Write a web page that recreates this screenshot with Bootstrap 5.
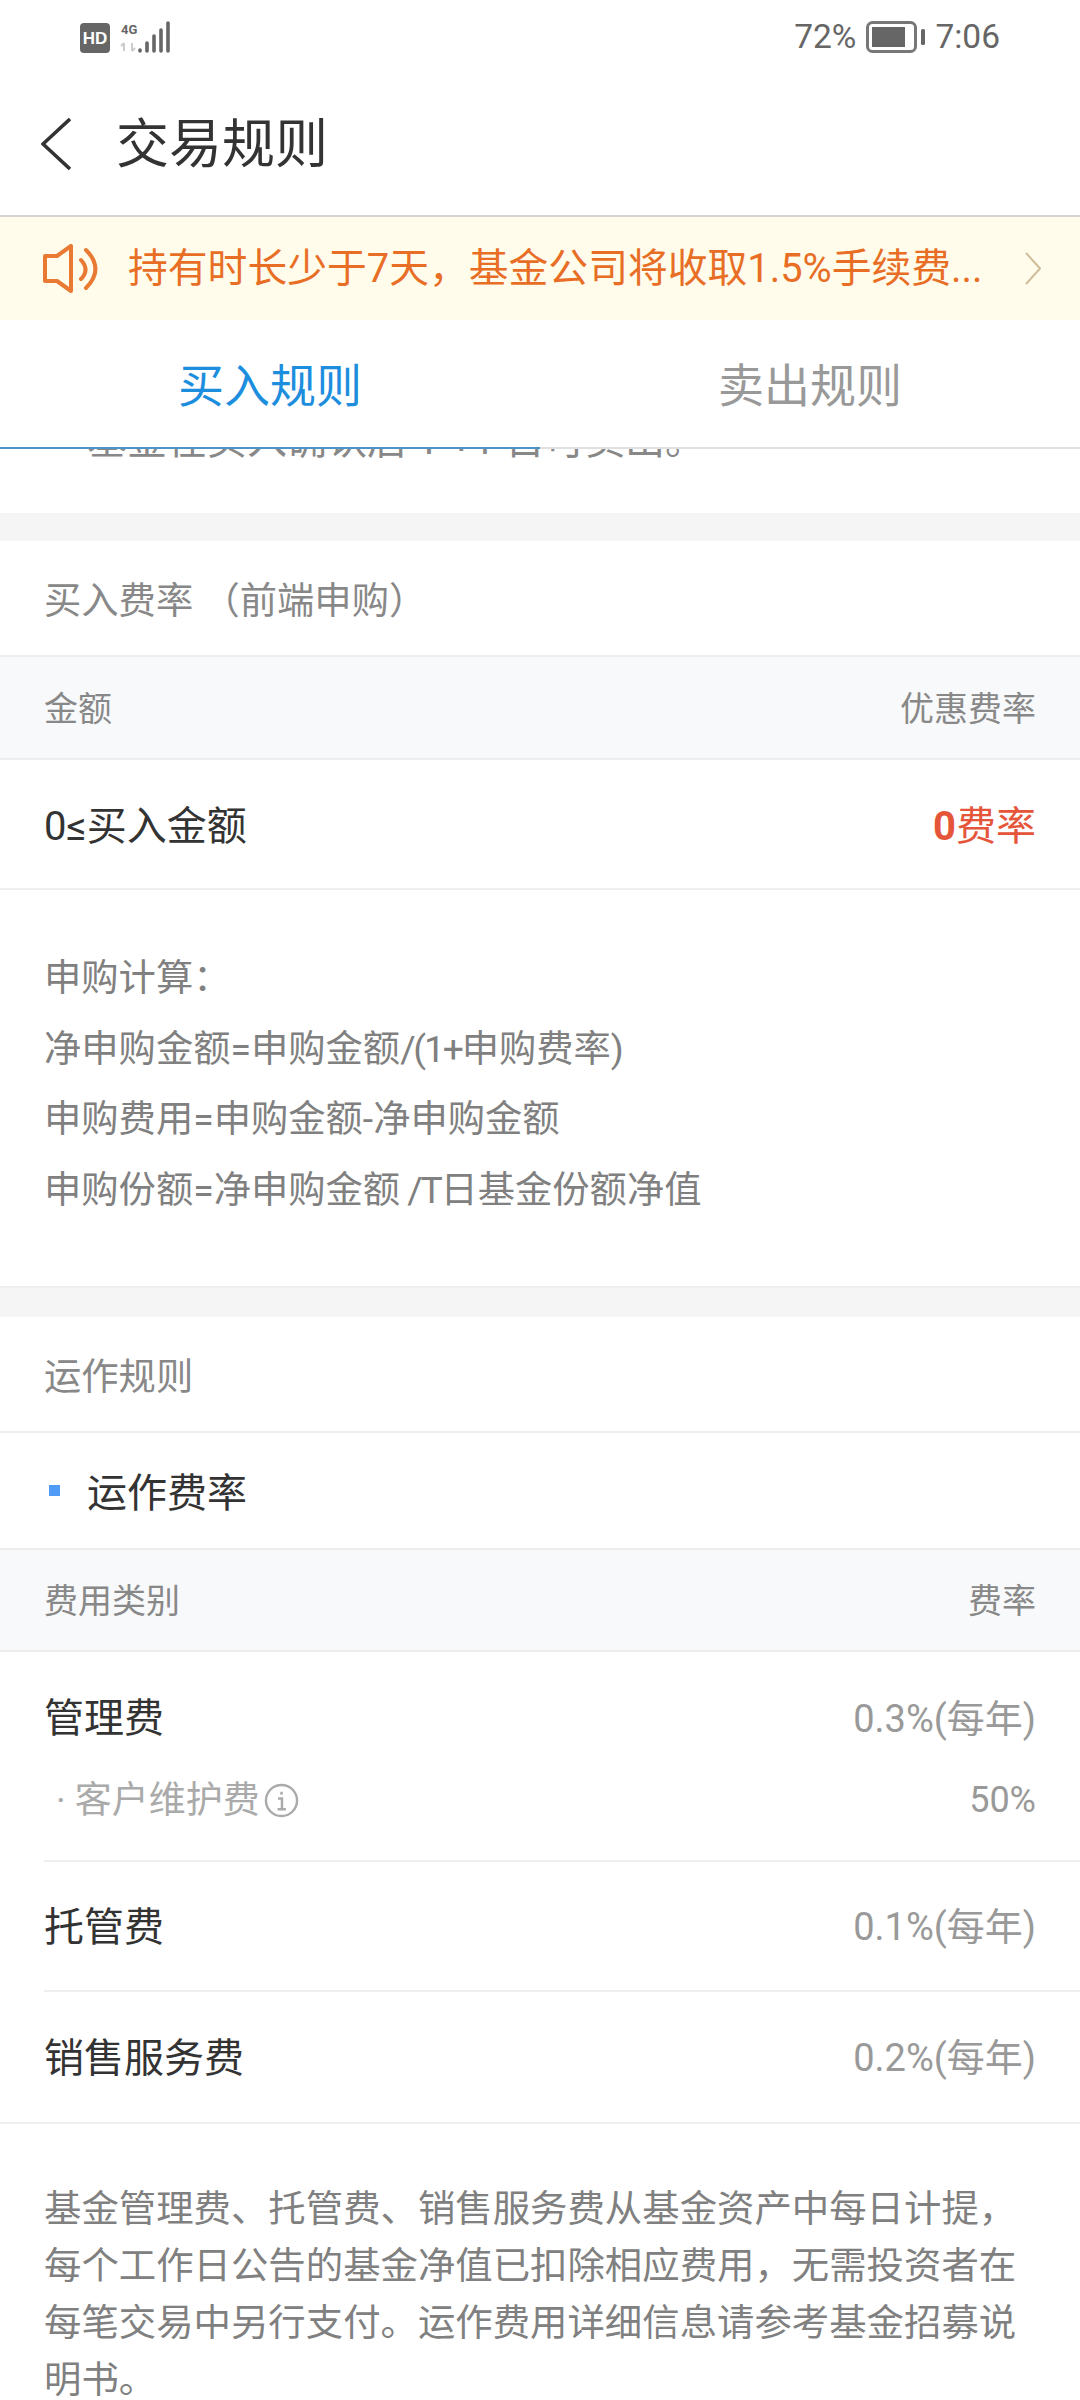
<!DOCTYPE html>
<html lang="zh-CN"><head><meta charset="utf-8">
<link href="https://cdn.jsdelivr.net/npm/bootstrap@5.3.0/dist/css/bootstrap.min.css" rel="stylesheet">
<style>
html,body{background:#fff;}
body{width:1080px;height:2400px;overflow:hidden;font-family:Roboto,"Noto Sans CJK SC",sans-serif;color:#333;}
.sbar{height:60px;padding:14px 80px 0 80px;color:#666;}
.sbar-txt{font-family:Roboto,sans-serif;font-size:33.5px;line-height:36px;color:#666;}
.sbar-batt{margin:0 10px;}
.hdr{height:157px;border-bottom:2px solid #d4d4d4;padding:12px 0 0 41px;}
.hdr-title{font-size:53px;line-height:60px;color:#333;margin-left:45px;padding-top:2px;}
.notice{height:103px;background:#fffcec;padding:0 39px 0 43px;color:#e86e26;font-size:39.8px;line-height:50px;}
.notice-txt{margin-left:30px;white-space:nowrap;}
.tabbar{height:129px;border-bottom:2px solid #e0e0e0;font-size:46px;line-height:56px;}
.tab-it{width:540px;color:#999;padding-top:4px;}
.tab-on{color:#1d8ede;border-bottom:2px solid #4b94c8;margin-bottom:-2px;}
.clipped{height:64px;overflow:hidden;font-size:40px;line-height:50px;color:#888;padding-left:87px;}
.clipped-txt{margin-top:-33px;white-space:nowrap;}
.band-a{height:28px;background:#f5f5f5;}
.band-b{height:29px;background:#f5f5f5;}
.sec-title{height:116px;border-bottom:2px solid #eee;padding:7px 0 0 44px;font-size:37.3px;color:#888;}
.thead-row{height:102px;background:#f8f9fb;border-bottom:2px solid #eee;padding:3px 44px 0;font-size:34px;color:#888;}
.thead-a{height:103px;}
.tr-buy{height:130px;border-bottom:2px solid #eee;padding:5px 44px 0;font-size:40px;color:#333;}
.rate{color:#e5553a;}
.rate b{font-weight:700;font-family:Roboto,sans-serif;letter-spacing:-2px;margin-right:2px;}
.calc{height:398px;padding:53px 44px 0;font-size:37.3px;line-height:70.7px;color:#808080;border-bottom:2px solid #eee;}
.tight{letter-spacing:-2.2px;}
.sub-title{height:117px;border-bottom:2px solid #eee;padding:6px 0 0 49px;font-size:40px;color:#333;}
.sq{width:11px;height:11px;background:#4f9bf5;margin:0 27px 6px 0;}
.fee{padding-left:44px;}
.fee-name{font-size:40px;color:#333;}
.fee-val{font-size:38px;color:#999;}
.fee-a{height:131px;padding:3px 44px 0 0;}
.fee-b{height:79px;padding-right:44px;border-bottom:2px solid #eee;font-size:37px;line-height:35px;color:#aaa;}
.fee-dot{margin:0 9px 0 12px;}
.fee-num{color:#999;font-size:36px;}
.fee-row{height:130px;border-bottom:2px solid #eee;padding:3px 44px 0 0;}
.fee-last{border-bottom:0;}
.note{padding:57px 44px 0;font-size:37.4px;line-height:57px;color:#808080;border-top:2px solid #eee;}
</style></head><body>
<div class="sbar d-flex align-items-center justify-content-between">
  <svg width="90" height="32" viewBox="0 0 90 32" class="flex-shrink-0">
    <rect x="0" y="2" width="30" height="30" rx="4" fill="#666"/>
    <text x="15" y="23" text-anchor="middle" font-family="Liberation Sans" font-weight="700" font-size="17" fill="#fff">HD</text>
    <text x="41" y="13" font-family="Roboto" font-weight="700" font-size="13" fill="#666">4G</text>
    <path d="M44 22v8M41 25l3-3M52 22v8M52 30l3-3" stroke="#ccc" stroke-width="2" fill="none"/>
    <g stroke="#666" stroke-width="3.6" stroke-linecap="round"><path d="M60 29v1M67 22v8M74 15v15M81 9v21M88 2v28"/></g>
  </svg>
  <div class="d-flex align-items-center">
    <span class="sbar-txt">72%</span>
    <svg width="59" height="32" viewBox="0 0 59 32" class="sbar-batt"><rect x="1.5" y="1.5" width="48" height="29" rx="5" fill="none" stroke="#777" stroke-width="3"/><rect x="6" y="6" width="33" height="20" fill="#666"/><rect x="55" y="8" width="4" height="16" rx="1.5" fill="#666"/></svg>
    <span class="sbar-txt">7:06</span>
  </div>
</div>
<div class="hdr d-flex align-items-center">
  <svg width="30" height="52" viewBox="0 0 30 52" class="flex-shrink-0"><path d="M29 1 L2 26 L29 51" fill="none" stroke="#333" stroke-width="3.6"/></svg>
  <div class="hdr-title">交易规则</div>
</div>
<div class="notice d-flex align-items-center">
  <svg width="55" height="49" viewBox="0 0 55 49" class="flex-shrink-0"><path d="M2 12h12L28 2v45L14 37H2z" fill="none" stroke="#e87a33" stroke-width="4" stroke-linejoin="round"/><path d="M38 16Q47 26 38 35M43 6Q62 25 43 44" fill="none" stroke="#e87a33" stroke-width="4" stroke-linecap="round"/></svg>
  <div class="notice-txt flex-grow-1">持有时长少于7天，基金公司将收取1.5%手续费...</div>
  <svg width="16" height="33" viewBox="0 0 16 33" class="flex-shrink-0"><path d="M1 1l14 15.500L1 32" fill="none" stroke="#d2bd9a" stroke-width="2"/></svg>
</div>
<div class="tabbar d-flex">
  <div class="tab-it tab-on d-flex align-items-center justify-content-center">买入规则</div>
  <div class="tab-it d-flex align-items-center justify-content-center">卖出规则</div>
</div>
<div class="clipped"><div class="clipped-txt">基金在买入确认后 T +1 日可卖出。</div></div>
<div class="band-a"></div>
<div class="sec-title d-flex align-items-center">买入费率 （前端申购）</div>
<div class="thead-row thead-a d-flex align-items-center justify-content-between"><span>金额</span><span>优惠费率</span></div>
<div class="tr-buy d-flex align-items-center justify-content-between"><span>0≤买入金额</span><span class="rate"><b>0</b>费率</span></div>
<div class="calc">申购计算：<br>净申购金额=申购金额<span class="tight">/(1+</span>申购费率<span class="tight">)</span><br>申购费用=申购金额-净申购金额<br>申购份额=净申购金额<span class="tight"> /T</span>日基金份额净值</div>
<div class="band-b"></div>
<div class="sec-title d-flex align-items-center">运作规则</div>
<div class="sub-title d-flex align-items-center"><span class="sq"></span>运作费率</div>
<div class="thead-row d-flex align-items-center justify-content-between"><span>费用类别</span><span>费率</span></div>
<div class="fee">
  <div class="fee-a d-flex align-items-center justify-content-between"><span class="fee-name">管理费</span><span class="fee-val">0.3%(每年)</span></div>
  <div class="fee-b d-flex align-items-start justify-content-between"><span class="d-flex align-items-center"><span class="fee-dot">·</span>客户维护费<svg width="35" height="35" viewBox="0 0 36 36" class="ms-1 flex-shrink-0"><circle cx="18" cy="18" r="16" fill="none" stroke="#aaa" stroke-width="2.5"/><path d="M18 9v3M14.500 16h4v11M14 27h8.500" fill="none" stroke="#aaa" stroke-width="2.5"/></svg></span><span class="fee-num">50%</span></div>
  <div class="fee-row d-flex align-items-center justify-content-between"><span class="fee-name">托管费</span><span class="fee-val">0.1%(每年)</span></div>
  <div class="fee-row fee-last d-flex align-items-center justify-content-between"><span class="fee-name">销售服务费</span><span class="fee-val">0.2%(每年)</span></div>
</div>
<div class="note">基金管理费、托管费、销售服务费从基金资产中每日计提，每个工作日公告的基金净值已扣除相应费用，无需投资者在每笔交易中另行支付。运作费用详细信息请参考基金招募说明书。</div>
</body></html>
